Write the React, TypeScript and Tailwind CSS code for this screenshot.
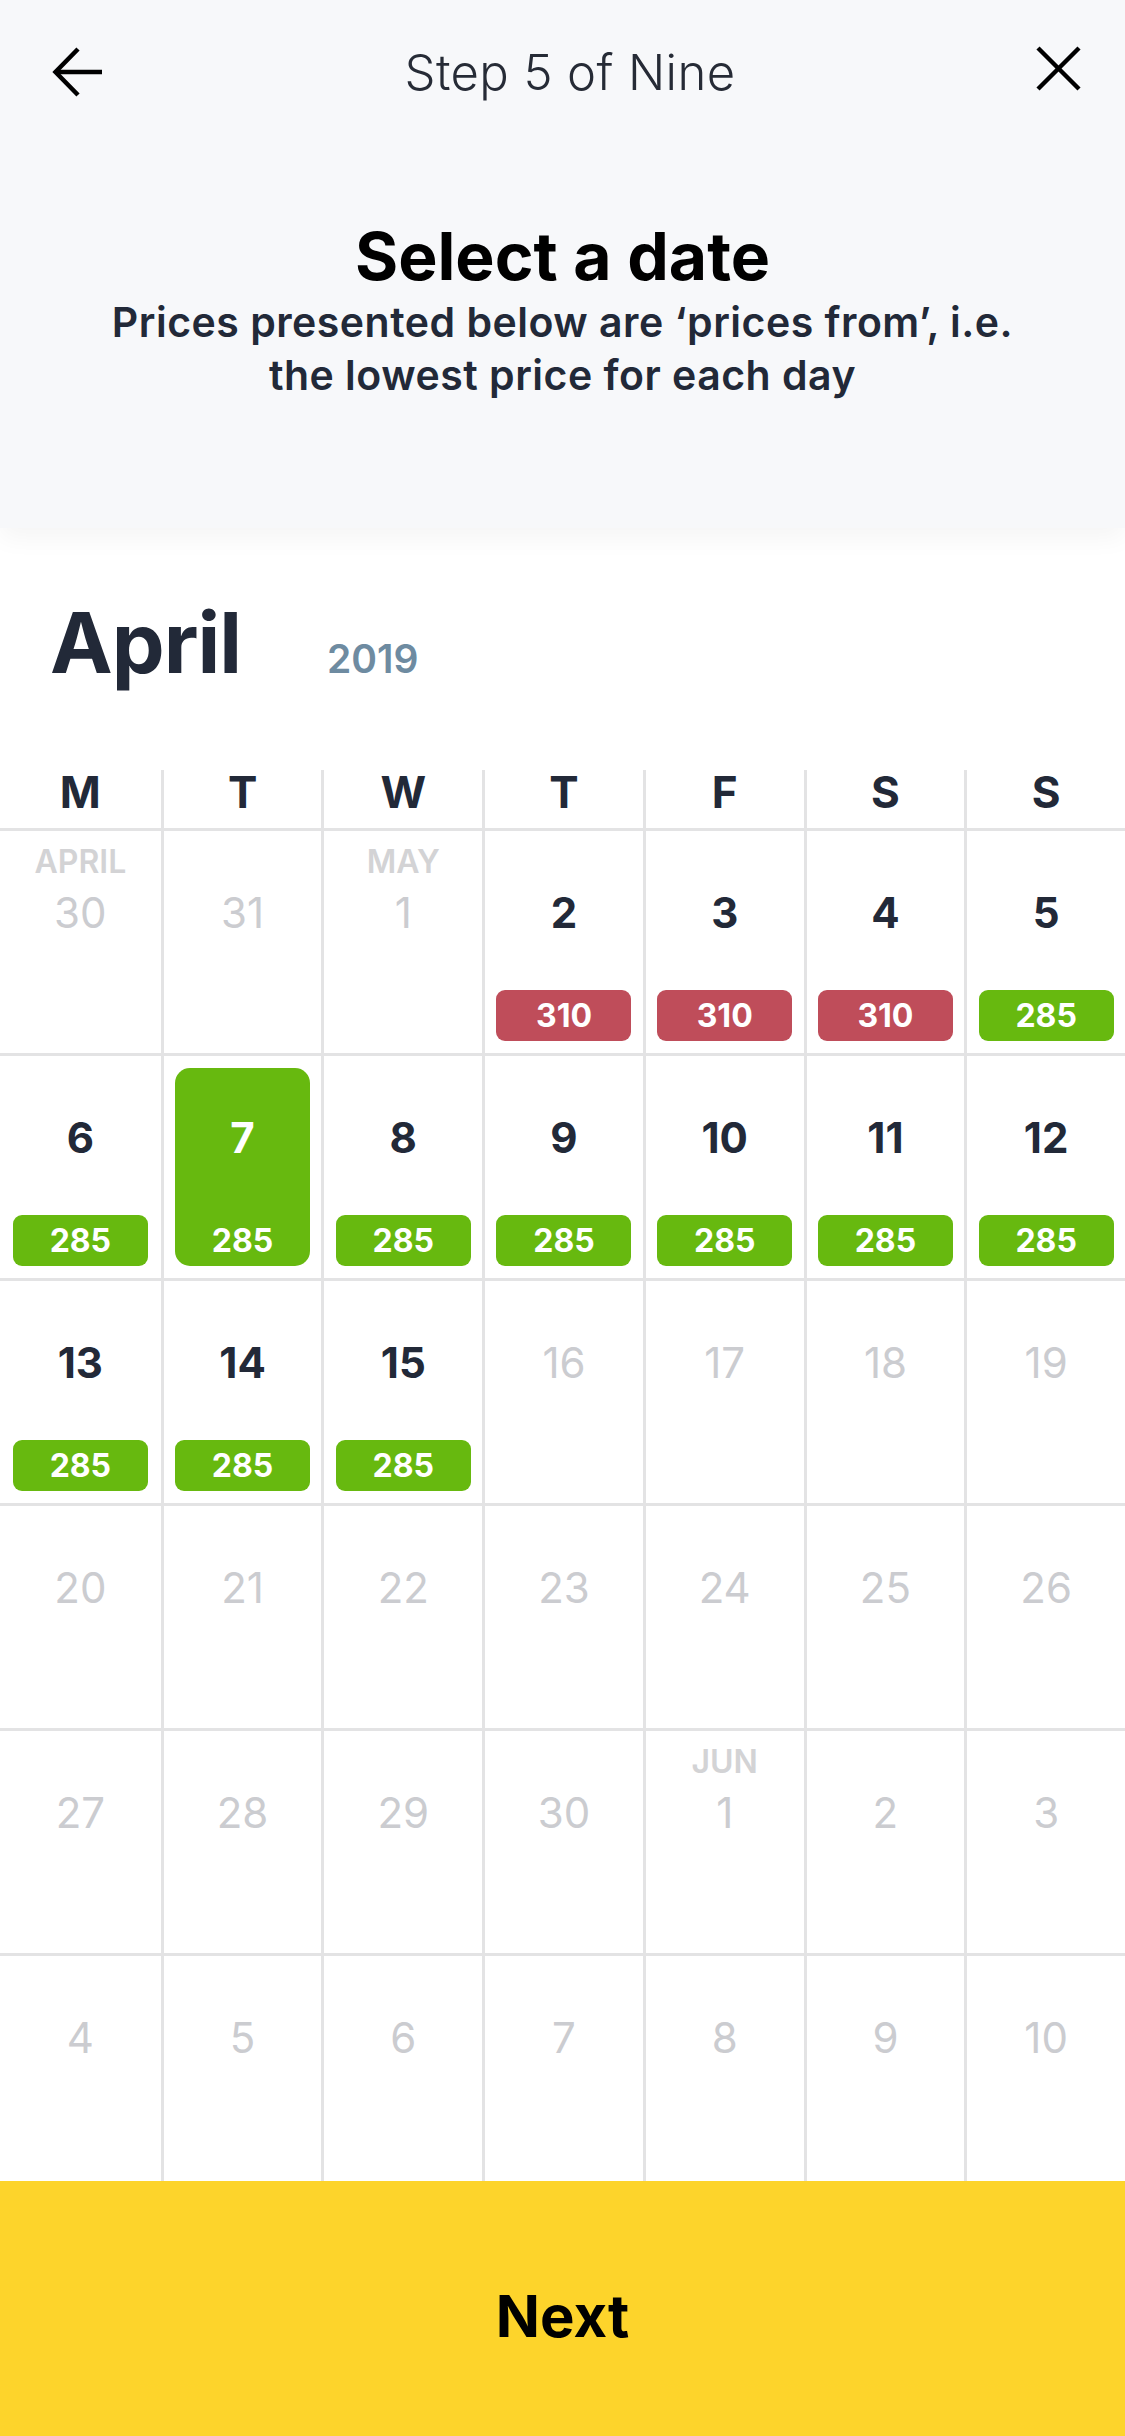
import React from "react";

type Day = {
  day: number;
  month?: string;
  price?: number;
  tone?: "red" | "green";
  selected?: boolean;
};

const weekdays = ["M", "T", "W", "T", "F", "S", "S"];

const g = (day: number, selected = false): Day => ({
  day,
  price: 285,
  tone: "green",
  selected,
});
const r = (day: number): Day => ({ day, price: 310, tone: "red" });
const off = (day: number, month?: string): Day => ({ day, month });

const weeks: Day[][] = [
  [off(30, "APRIL"), off(31), off(1, "MAY"), r(2), r(3), r(4), g(5)],
  [g(6), g(7, true), g(8), g(9), g(10), g(11), g(12)],
  [g(13), g(14), g(15), off(16), off(17), off(18), off(19)],
  [off(20), off(21), off(22), off(23), off(24), off(25), off(26)],
  [off(27), off(28), off(29), off(30), off(1, "JUN"), off(2), off(3)],
  [off(4), off(5), off(6), off(7), off(8), off(9), off(10)],
];

const DayCell = ({ d, col, last }: { d: Day; col: number; last: boolean }) => {
  const active = d.price !== undefined;
  return (
    <div
      className={`h-[225px] border-[#e3e3e4] ${col > 0 ? "border-l-[3px]" : ""} ${
        last ? "" : "border-b-[3px]"
      }`}
    >
      <div
        className={`mx-auto mt-[12px] flex h-[198px] w-[135px] flex-col items-center rounded-[15px] pt-[2px] ${
          d.selected ? "bg-[#67b90f]" : ""
        }`}
      >
        <span className="h-[33px] text-[32px] font-semibold leading-[33px] text-[#d3d3d5]">
          {d.month}
        </span>
        <span
          className={`mt-[13px] text-[42px] leading-[44px] ${
            d.selected
              ? "font-bold text-white"
              : active
              ? "font-bold text-[#222938]"
              : "font-normal text-[#cbccd0]"
          }`}
        >
          {d.day}
        </span>
        {active && (
          <span
            className={`mt-auto flex h-[51px] w-full items-center justify-center rounded-[9px] text-[32px] font-bold leading-none text-white ${
              d.selected ? "" : d.tone === "red" ? "bg-[#bf4d5a]" : "bg-[#67b90f]"
            }`}
          >
            {d.price}
          </span>
        )}
      </div>
    </div>
  );
};

export default function App() {
  return (
    <div className="flex min-h-[2436px] w-[1125px] flex-col bg-white font-['Inter','Noto_Sans',sans-serif] text-[#222938]">
      {/* Header */}
      <div className="relative z-10 h-[528px] bg-[#f7f8fa] shadow-[0_10px_24px_rgba(0,0,0,0.045)]">
        <div className="flex h-[144px] items-center justify-between pl-[52px] pr-[42px]">
          <svg width="54" height="54" viewBox="0 0 54 54" fill="none" stroke="#000" strokeWidth="4.5">
            <path d="M50 27H4" />
            <path d="M26 4L3.5 27L26 50" />
          </svg>
          <span className="text-[49px] font-light leading-none tracking-[0.4px] text-[#262b36]">
            Step 5 of Nine
          </span>
          <svg className="-mt-[7px]" width="49" height="49" viewBox="0 0 49 49" fill="none" stroke="#000" strokeWidth="4.5">
            <path d="M4 4L45 45" />
            <path d="M45 4L4 45" />
          </svg>
        </div>
        <h1 className="mt-[72px] text-center text-[66px] font-bold leading-[80px] text-black">
          Select a date
        </h1>
        <p className="text-center text-[41px] font-semibold leading-[53px] tracking-[0.5px] text-[#222938]">
          Prices presented below are ‘prices from’, i.e.
          <br />
          the lowest price for each day
        </p>
      </div>

      {/* Month */}
      <div className="flex items-baseline pl-[50px] pt-[73px] pb-[85px]">
        <span className="text-[84px] font-bold leading-[84px] tracking-[-1px] text-[#222938]">April</span>
        <span className="ml-[86px] text-[39px] font-semibold leading-none text-[#6e8ba1]">2019</span>
      </div>

      {/* Weekdays */}
      <div className="grid grid-cols-7 border-b-[3px] border-[#e3e3e4]">
        {weekdays.map((w, i) => (
          <div
            key={i}
            className={`h-[58px] border-[#e3e3e4] text-center text-[44px] font-bold leading-[45px] text-[#222938] ${
              i > 0 ? "border-l-[3px]" : ""
            }`}
          >
            {w}
          </div>
        ))}
      </div>

      {/* Days */}
      <div className="grid grid-cols-7">
        {weeks.map((week, wi) =>
          week.map((d, ci) => (
            <DayCell key={`${wi}-${ci}`} d={d} col={ci} last={wi === weeks.length - 1} />
          ))
        )}
      </div>

      {/* Next */}
      <button className="flex h-[255px] w-full items-center justify-center bg-[#fdd42b] pt-[15px] text-[58px] font-bold text-black">
        Next
      </button>
    </div>
  );
}
